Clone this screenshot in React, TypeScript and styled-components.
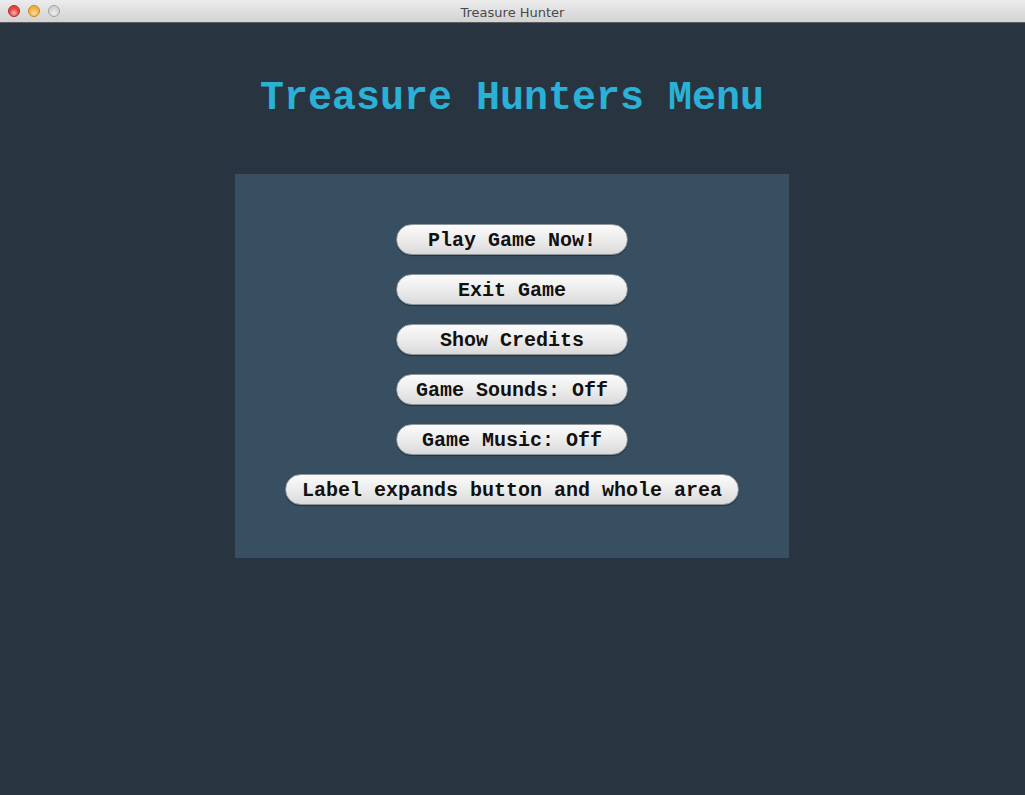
import React from 'react';
import styled, { createGlobalStyle } from 'styled-components';

const GlobalStyle = createGlobalStyle`
  html, body {
    margin: 0;
    padding: 0;
    background: #283540;
  }
  #root {
    width: 1025px;
    height: 795px;
  }
`;

const Window = styled.div`
  display: flex;
  flex-direction: column;
  width: 1025px;
  height: 795px;
  background: #283540;
  overflow: hidden;
`;

const TitleBar = styled.div`
  position: relative;
  height: 22px;
  display: flex;
  align-items: center;
  justify-content: center;
  background: linear-gradient(#ececec, #d3d3d3);
  border-bottom: 1px solid #5e5e5e;
  flex-shrink: 0;
`;

const Lights = styled.div`
  position: absolute;
  left: 8px;
  top: 5px;
  display: flex;
  gap: 8px;
`;

const Light = styled.span<{ $color: string; $dark: string }>`
  width: 12px;
  height: 12px;
  border-radius: 50%;
  box-sizing: border-box;
  border: 1px solid ${(p) => p.$dark};
  background: radial-gradient(circle at 50% 70%, #ffffff99 0%, transparent 55%),
    ${(p) => p.$color};
`;

const WindowTitle = styled.span`
  font-family: 'DejaVu Sans', sans-serif;
  font-size: 13px;
  color: #4a4a4a;
  padding-top: 2px;
`;

const Content = styled.div`
  flex: 1;
  display: flex;
  flex-direction: column;
  align-items: center;
  padding: 52px 1px 0 0;
`;

const Heading = styled.h1`
  margin: 0;
  font-family: 'Liberation Mono', 'Courier New', monospace;
  font-weight: bold;
  font-size: 40px;
  line-height: 48px;
  color: #2bb0d6;
`;

const Panel = styled.div`
  margin-top: 51px;
  width: 554px;
  box-sizing: border-box;
  padding: 50px 0 53px;
  background: #374f60;
  display: flex;
  flex-direction: column;
  align-items: center;
  gap: 19px;
`;

const MenuButton = styled.button`
  min-width: 232px;
  height: 31px;
  box-sizing: border-box;
  display: flex;
  align-items: center;
  justify-content: center;
  padding: 3px 16px 0;
  border-radius: 16px;
  border: 1px solid #8d969c;
  background: linear-gradient(#fbfbfb, #e9e9e9 60%, #d9d9d9);
  box-shadow: 0 1px 1px rgba(0, 0, 0, 0.35);
  font-family: 'Liberation Mono', 'Courier New', monospace;
  font-weight: bold;
  font-size: 20px;
  line-height: 26px;
  color: #111;
  white-space: pre;
  cursor: pointer;
`;

const items = [
  'Play Game Now!',
  'Exit Game',
  'Show Credits',
  'Game Sounds: Off',
  'Game Music: Off',
  'Label expands button and whole area',
];

export default function App() {
  return (
    <>
      <GlobalStyle />
      <Window>
        <TitleBar>
          <Lights>
            <Light $color="#e5443c" $dark="#b0302a" />
            <Light $color="#f2b23a" $dark="#c18a26" />
            <Light $color="#d4d4d4" $dark="#a0a0a0" />
          </Lights>
          <WindowTitle>Treasure Hunter</WindowTitle>
        </TitleBar>
        <Content>
          <Heading>Treasure Hunters Menu</Heading>
          <Panel>
            {items.map((label) => (
              <MenuButton key={label}>{label}</MenuButton>
            ))}
          </Panel>
        </Content>
      </Window>
    </>
  );
}
